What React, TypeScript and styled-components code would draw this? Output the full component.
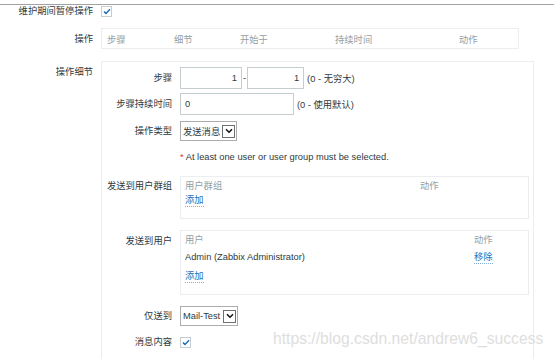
import React from "react";
import styled, { createGlobalStyle } from "styled-components";

const GlobalStyle = createGlobalStyle`
  html, body { margin: 0; padding: 0; background: #fff; }
  body {
    font-family: "Liberation Sans", Arial, "Noto Sans CJK SC", sans-serif;
    font-size: 9.3px;
    color: #2f3a40;
    width: 554px;
    height: 359px;
    overflow: hidden;
  }
`;

const Page = styled.div`
  position: relative;
  width: 554px;
  height: 359px;
  overflow: hidden;
`;

const TopRule = styled.div`
  height: 4px;
  border-bottom: 1px solid #a3a3a3;
`;

const Form = styled.div`
  display: flex;
  flex-direction: column;
`;

const FormRow = styled.div<{ $mt: number; $align?: string }>`
  display: grid;
  grid-template-columns: 93px 1fr;
  column-gap: 8px;
  margin-top: ${(p) => p.$mt}px;
  align-items: ${(p) => p.$align || "center"};
`;

const Label = styled.div<{ $pt?: number }>`
  text-align: right;
  line-height: 12px;
  padding-top: ${(p) => p.$pt || 0}px;
  white-space: nowrap;
`;

const Checkbox = styled.span`
  display: inline-flex;
  align-items: center;
  justify-content: center;
  width: 11px;
  height: 11px;
  box-sizing: border-box;
  border: 1px solid #c4cdd2;
  background: #fff;
`;

const CheckMark = () => (
  <svg width="8" height="7" viewBox="0 0 8 7">
    <path d="M1 3.6 L3 5.4 L7 1.2" fill="none" stroke="#1f6fb8" strokeWidth="1.5" />
  </svg>
);

const OpsTable = styled.div`
  width: 418px;
  height: 21px;
  box-sizing: border-box;
  border: 1px solid #ebeef0;
  display: grid;
  grid-template-columns: 67px 66px 95px 124px 1fr;
  align-items: center;
  padding-left: 5px;
`;

const HeadCell = styled.span`
  color: #939fa6;
  white-space: nowrap;
`;

const DetailBox = styled.div`
  width: 433px;
  box-sizing: border-box;
  border: 1px solid #ebeef0;
  border-bottom: none;
  padding: 5px 4px 40px 0;
  display: flex;
  flex-direction: column;
`;

const DetailRow = styled.div<{ $mt: number; $align?: string }>`
  display: grid;
  grid-template-columns: 70px 1fr;
  column-gap: 8px;
  margin-top: ${(p) => p.$mt}px;
  align-items: ${(p) => p.$align || "center"};
`;

const Controls = styled.div`
  display: flex;
  align-items: center;
  white-space: nowrap;
`;

const TextInput = styled.span<{ $w: number; $right?: boolean }>`
  display: inline-flex;
  align-items: center;
  justify-content: ${(p) => (p.$right ? "flex-end" : "flex-start")};
  width: ${(p) => p.$w}px;
  height: 22px;
  box-sizing: border-box;
  border: 1px solid #c6cdd1;
  padding: 0 4px;
  background: #fff;
`;

const Dash = styled.span`
  padding: 0 1px;
`;

const Hint = styled.span`
  margin-left: 3px;
`;

const Select = styled.span<{ $w: number }>`
  display: inline-flex;
  align-items: center;
  justify-content: space-between;
  width: ${(p) => p.$w}px;
  height: 20px;
  box-sizing: border-box;
  border: 1px solid #adadad;
  padding: 0 1px 0 2px;
  background: #fff;
`;

const SelectArrow = styled.span`
  display: inline-flex;
  align-items: center;
  justify-content: center;
  width: 13px;
  height: 13px;
  box-sizing: border-box;
  border: 1px solid #6f6f6f;
  background: #fff;
`;

const Chevron = () => (
  <svg width="8" height="6" viewBox="0 0 8 6">
    <path d="M1 1.2 L4 4.2 L7 1.2" fill="none" stroke="#111" strokeWidth="1.5" />
  </svg>
);

const Note = styled.div`
  line-height: 14px;
  white-space: nowrap;
`;

const Req = styled.span`
  color: #e33734;
`;

const ListBox = styled.div<{ $h: number }>`
  width: 349px;
  height: ${(p) => p.$h}px;
  box-sizing: border-box;
  border: 1px solid #ebeef0;
  padding: 1px 4px 0;
`;

const ListRow = styled.div<{ $cols: string; $mt?: number }>`
  display: grid;
  grid-template-columns: ${(p) => p.$cols};
  line-height: 17px;
  margin-top: ${(p) => p.$mt || 0}px;
  white-space: nowrap;
`;

const Link = styled.span`
  color: #1d71b8;
  border-bottom: 1px dotted #7fb0da;
  line-height: 11px;
  justify-self: start;
  align-self: center;
`;

const Watermark = styled.div`
  position: absolute;
  left: 273px;
  top: 330px;
  font-family: "Liberation Sans", Arial, sans-serif;
  font-size: 15.7px;
  line-height: 18px;
  color: #dedede;
  white-space: nowrap;
  pointer-events: none;
`;

export default function App() {
  return (
    <Page>
      <GlobalStyle />
      <TopRule />
      <Form>
        <FormRow $mt={0}>
          <Label>维护期间暂停操作</Label>
          <Controls>
            <Checkbox>
              <CheckMark />
            </Checkbox>
          </Controls>
        </FormRow>
        <FormRow $mt={11}>
          <Label>操作</Label>
          <OpsTable>
            <HeadCell>步骤</HeadCell>
            <HeadCell>细节</HeadCell>
            <HeadCell>开始于</HeadCell>
            <HeadCell>持续时间</HeadCell>
            <HeadCell>动作</HeadCell>
          </OpsTable>
        </FormRow>
        <FormRow $mt={12} $align="start">
          <Label $pt={5}>操作细节</Label>
          <DetailBox>
            <DetailRow $mt={0}>
              <Label>步骤</Label>
              <Controls>
                <TextInput $w={62} $right>
                  1
                </TextInput>
                <Dash>-</Dash>
                <TextInput $w={57} $right>
                  1
                </TextInput>
                <Hint>(0 - 无穷大)</Hint>
              </Controls>
            </DetailRow>
            <DetailRow $mt={4}>
              <Label>步骤持续时间</Label>
              <Controls>
                <TextInput $w={114}>0</TextInput>
                <Hint>(0 - 使用默认)</Hint>
              </Controls>
            </DetailRow>
            <DetailRow $mt={6}>
              <Label>操作类型</Label>
              <Controls>
                <Select $w={57}>
                  发送消息
                  <SelectArrow>
                    <Chevron />
                  </SelectArrow>
                </Select>
              </Controls>
            </DetailRow>
            <DetailRow $mt={9}>
              <span />
              <Note>
                <Req>*</Req> At least one user or user group must be selected.
              </Note>
            </DetailRow>
            <DetailRow $mt={12} $align="start">
              <Label $pt={4}>发送到用户群组</Label>
              <ListBox $h={43}>
                <ListRow $cols="235px 1fr">
                  <HeadCell>用户群组</HeadCell>
                  <HeadCell>动作</HeadCell>
                </ListRow>
                <ListRow $cols="1fr">
                  <Link>添加</Link>
                </ListRow>
              </ListBox>
            </DetailRow>
            <DetailRow $mt={11} $align="start">
              <Label $pt={5}>发送到用户</Label>
              <ListBox $h={65}>
                <ListRow $cols="289px 1fr">
                  <HeadCell>用户</HeadCell>
                  <HeadCell>动作</HeadCell>
                </ListRow>
                <ListRow $cols="289px 1fr">
                  <span>Admin (Zabbix Administrator)</span>
                  <Link>移除</Link>
                </ListRow>
                <ListRow $cols="1fr" $mt={5}>
                  <Link>添加</Link>
                </ListRow>
              </ListBox>
            </DetailRow>
            <DetailRow $mt={11}>
              <Label>仅送到</Label>
              <Controls>
                <Select $w={58}>
                  Mail-Test
                  <SelectArrow>
                    <Chevron />
                  </SelectArrow>
                </Select>
              </Controls>
            </DetailRow>
            <DetailRow $mt={10}>
              <Label>消息内容</Label>
              <Controls>
                <Checkbox>
                  <CheckMark />
                </Checkbox>
              </Controls>
            </DetailRow>
          </DetailBox>
        </FormRow>
      </Form>
      <Watermark>https://blog.csdn.net/andrew6_success</Watermark>
    </Page>
  );
}
